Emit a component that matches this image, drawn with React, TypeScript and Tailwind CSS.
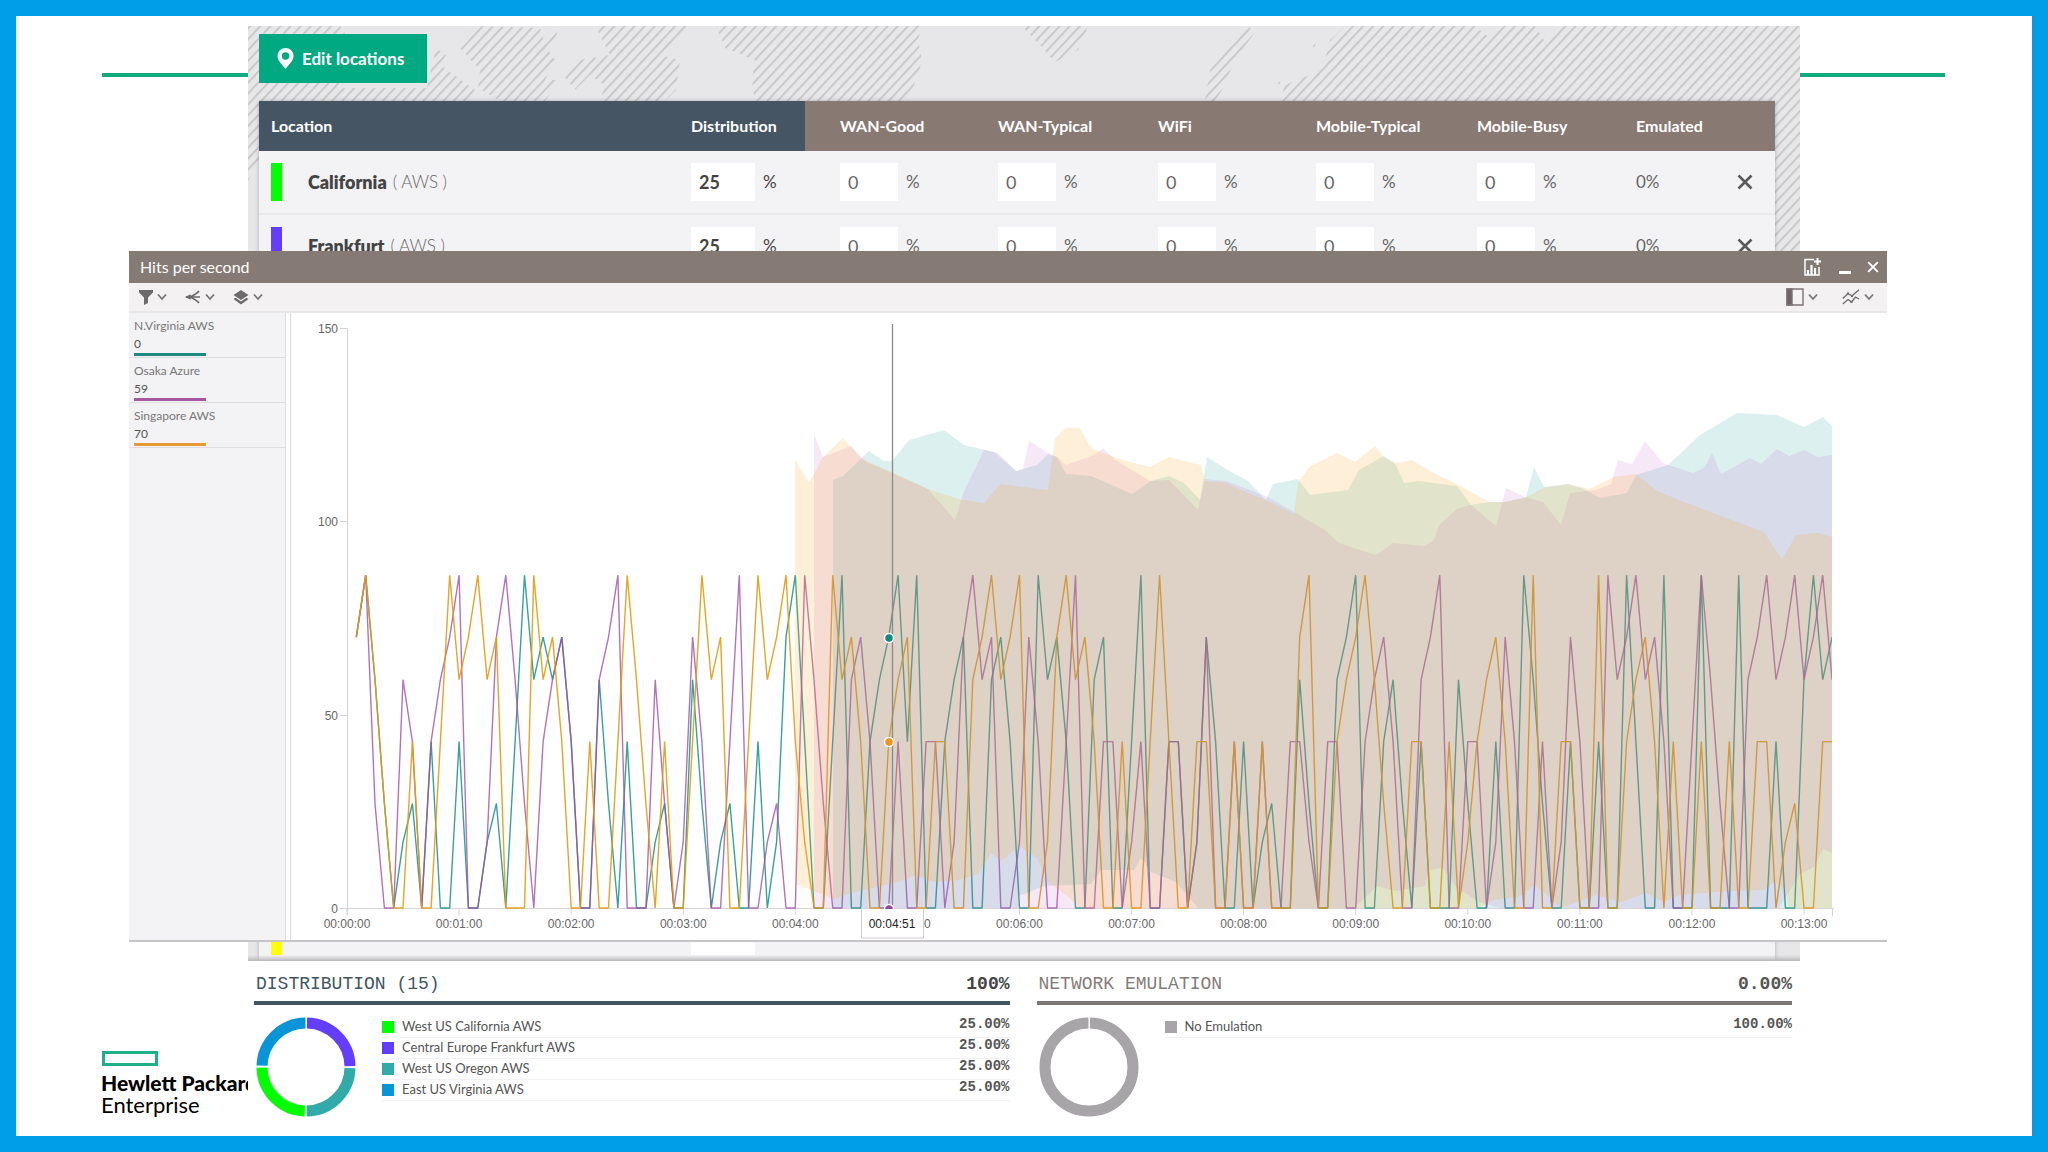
import React from "react";

/* ---------- data ---------- */

const orange = [
  70, 86, 59, 27, 0, 0, 43, 0, 0, 43, 86, 59, 70, 86, 59, 70, 0, 0, 0, 86, 59, 70, 43, 0, 0, 43, 0, 0, 43, 86, 59, 27, 0, 43, 0, 0, 43, 86, 59, 70,
  0, 0, 43, 86, 59, 70, 86, 43, 17, 0, 0, 86, 59, 70, 43, 0, 0, 43, 59, 70, 0, 0, 43, 43, 0, 0, 59, 70, 86, 59, 70, 86, 0, 0, 17, 70, 86, 59, 70, 43,
  0, 0, 43, 0, 0, 43, 86, 43, 0, 0, 43, 43, 0, 0, 43, 0, 0, 43, 0, 0, 0, 70, 86, 0, 0, 43, 59, 70, 86, 59, 27, 0, 0, 43, 43, 0, 0, 43, 0, 17,
  43, 59, 70, 43, 0, 0, 86, 0, 0, 43, 43, 0, 0, 86, 0, 0, 43, 59, 70, 43, 0, 43, 0, 0, 43, 0, 0, 43, 0, 0, 43, 43, 0, 17, 27, 0, 0, 43, 43,
];

const purple = [
  70, 86, 27, 0, 0, 59, 43, 0, 43, 59, 70, 86, 0, 0, 17, 70, 86, 59, 27, 0, 43, 59, 70, 43, 0, 0, 59, 70, 86, 0, 0, 0, 59, 27, 0, 17, 70, 43, 0, 0,
  43, 86, 0, 0, 17, 27, 0, 0, 86, 59, 27, 0, 0, 59, 70, 43, 0, 0, 43, 0, 0, 43, 43, 0, 17, 70, 86, 59, 70, 0, 0, 17, 70, 43, 0, 0, 43, 86, 0, 0,
  43, 43, 0, 17, 43, 0, 0, 43, 43, 0, 17, 70, 0, 0, 43, 0, 0, 43, 0, 0, 43, 43, 17, 0, 43, 43, 0, 0, 43, 59, 70, 43, 0, 0, 59, 70, 86, 0, 0, 43,
  43, 0, 17, 70, 43, 0, 0, 43, 0, 17, 70, 43, 0, 0, 86, 59, 70, 86, 59, 70, 43, 0, 0, 43, 86, 59, 27, 0, 0, 59, 70, 86, 59, 70, 86, 59, 70, 86, 59,
];

const teal = [
  70, 86, 59, 27, 0, 17, 27, 0, 43, 0, 0, 43, 0, 0, 17, 27, 0, 43, 86, 59, 70, 59, 70, 43, 0, 0, 59, 27, 0, 43, 0, 0, 17, 27, 0, 0, 59, 27, 0, 17,
  27, 0, 0, 43, 0, 17, 70, 86, 43, 0, 0, 43, 86, 0, 0, 43, 59, 70, 86, 43, 86, 0, 0, 43, 59, 70, 0, 0, 59, 70, 43, 0, 0, 86, 59, 70, 43, 0, 0, 59,
  70, 0, 0, 43, 86, 0, 0, 43, 43, 0, 17, 70, 43, 0, 0, 43, 0, 17, 27, 0, 0, 59, 27, 0, 0, 59, 70, 86, 0, 0, 43, 59, 27, 0, 43, 0, 0, 0, 59, 27,
  0, 0, 43, 0, 0, 86, 59, 27, 0, 0, 43, 0, 0, 43, 0, 0, 86, 43, 0, 0, 86, 0, 0, 0, 86, 0, 0, 0, 86, 0, 0, 0, 43, 0, 0, 59, 86, 59, 70,
];

const orangeBand =
  "795,460 809,483 823,457 843,438 862,459 887,470 928,489 962,500 984,503 1000,484 1048,490 1055,438 1066,428 1080,428 1091,448 1103,453 1123,460 1150,467 1169,457 1201,465 1205,481 1226,483 1248,493 1266,500 1294,514 1298,483 1309,467 1337,453 1355,462 1375,446 1384,458 1398,463 1412,460 1432,472 1457,484 1489,502 1505,502 1525,498 1543,488 1568,484 1589,489 1614,477 1636,474 1657,491 1679,500 1729,519 1764,532 1782,560 1796,535 1818,533 1832,537 " +
  "1832,908 1789,908 1786,891 1775,881 1764,890 1729,891 1679,895 1664,902 1646,893 1621,902 1596,895 1561,908 1543,891 1534,885 1518,897 1493,900 1478,908 1080,908 1066,895 1048,882 1037,858 1019,846 1001,861 991,853 978,874 959,880 934,882 916,875 898,882 851,893 834,899 814,891 795,884";

const purpleBand =
  "814,434 823,457 851,446 866,462 887,471 928,489 955,520 964,491 984,450 998,453 1016,471 1023,469 1029,441 1048,453 1057,457 1066,465 1094,455 1103,448 1114,459 1150,481 1169,480 1198,510 1205,479 1226,481 1266,496 1294,512 1325,530 1339,543 1357,549 1376,555 1393,543 1425,546 1434,540 1439,525 1457,509 1471,505 1496,526 1506,488 1525,497 1543,502 1561,525 1570,493 1596,490 1611,484 1618,460 1632,464 1645,441 1663,463 1693,473 1704,468 1712,453 1721,474 1750,458 1761,464 1777,449 1789,456 1804,450 1818,457 1832,455 " +
  "1832,853 1823,849 1814,867 1800,874 1779,908 1500,908 1479,902 1457,888 1443,868 1430,870 1425,886 1396,891 1377,886 1354,908 814,908";

const tealBand =
  "833,480 843,476 869,451 884,461 892,461 909,440 944,430 964,445 994,452 1016,471 1037,465 1048,454 1057,457 1066,474 1091,476 1132,494 1151,481 1169,476 1184,483 1200,500 1207,457 1226,469 1248,481 1266,500 1273,484 1298,479 1310,495 1348,490 1359,470 1384,456 1396,465 1404,483 1418,481 1457,486 1471,505 1489,502 1505,502 1526,497 1534,467 1544,487 1568,484 1582,488 1600,498 1627,493 1636,475 1668,465 1700,435 1737,413 1777,415 1804,427 1823,417 1832,426 " +
  "1832,908 1198,908 1176,882 1151,872 1141,858 1134,870 1101,870 1091,884 1044,886 1019,896 1018,908 833,908";

const X0 = 347;
const Y0 = 908;
const STEP = 9.34;
const UNIT = 3.87;

const toPoints = (values: number[]) =>
  values.map((v, i) => `${(X0 + STEP * (i + 1)).toFixed(1)},${(Y0 - v * UNIT).toFixed(1)}`).join(" ");

const minutes = Array.from({ length: 14 }, (_, m) => ({
  x: X0 + m * 12 * STEP,
  label: `00:${String(m).padStart(2, "0")}:00`,
}));

const legend = [
  { name: "N.Virginia AWS", value: "0", bar: "bg-[#1d8a7e]" },
  { name: "Osaka Azure", value: "59", bar: "bg-[#a6559f]" },
  { name: "Singapore AWS", value: "70", bar: "bg-[#e79a34]" },
];

const locations = [
  { name: "California", color: "bg-[#00ff00]" },
  { name: "Frankfurt", color: "bg-[#643eff]" },
];

const networks = ["WAN-Good", "WAN-Typical", "WiFi", "Mobile-Typical", "Mobile-Busy"];

const shares = [
  { name: "West US California AWS", color: "bg-[#00ff00]" },
  { name: "Central Europe Frankfurt AWS", color: "bg-[#643eff]" },
  { name: "West US Oregon AWS", color: "bg-[#33aaaa]" },
  { name: "East US Virginia AWS", color: "bg-[#0795d8]" },
];

/* ---------- small drawings ---------- */

const Chevron = () => (
  <svg viewBox="0 0 10 8" className="h-2 w-2.5" fill="none" stroke="#777" strokeWidth="1.8">
    <path d="M1 1.5 5 6l4-4.5" />
  </svg>
);

const Cross = ({ className }: { className: string }) => (
  <svg viewBox="0 0 16 16" className={className} fill="none" stroke="currentColor" strokeWidth="2.6">
    <path d="M1.5 1.5 14.5 14.5M14.5 1.5 1.5 14.5" />
  </svg>
);

function MapBackdrop() {
  return (
    <svg
      aria-hidden="true"
      className="absolute inset-0 h-full w-full"
      viewBox="248 26 1552 935"
      preserveAspectRatio="xMidYMin slice"
    >
      <defs>
        <pattern id="hatch" width="7.4" height="9" patternUnits="userSpaceOnUse" patternTransform="rotate(43)">
          <rect width="2" height="9" fill="#c9c8ca" />
        </pattern>
      </defs>
      <g fill="url(#hatch)">
        <path d="M248 26h92l8 12-10 50h89l9-40 10 7-6 10 35 25-5 11H259v60l-11 20z" />
        <path d="M475 26l65 2 5 17 10 15-10 20h15l-15 21h-45l-22-13 2-18-23-25z" />
        <path d="M548 36l10-6-4 14-12 10zM595 26h95l-10 14-20 15 20 5-4 30-11 11h-65l5-16-15-10-15 15-12-15 17-15 30-5z" />
        <path d="M716 26h206l-4 14 4 20-4 15-10 26H755l-3-21 3-20-30-12z" />
        <path d="M1022 26h66l-10 24-23 12-15-17zM1248 26l7 6-20 28-13 30-7 11h-10l5-31z" />
        <path d="M1345 26h130l12 10 14-10h34l10 16 14-16h241v230h-25V101h-495l5-16 25-10 15-15 5-20z" />
        <path d="M1310 42l9-6-5 12zM1276 80l6-3-3 8z" />
      </g>
    </svg>
  );
}

function Donut({ parts }: { parts: string[] }) {
  const r = 44;
  const c = 2 * Math.PI * r;
  const len = c / parts.length;
  return (
    <svg viewBox="0 0 100 100" className="h-[100px] w-[100px] shrink-0" fill="none" strokeWidth="11">
      {parts.map((color, i) => (
        <circle
          key={color}
          cx="50"
          cy="50"
          r={r}
          stroke={color}
          strokeDasharray={`${len - 2} ${c - len + 2}`}
          strokeDashoffset={-(len * i + 1)}
          transform="rotate(-90 50 50)"
        />
      ))}
    </svg>
  );
}

/* ---------- locations table ---------- */

function PercentCell({ label, value, bold }: { label: string; value: string; bold?: boolean }) {
  return (
    <div className="flex items-center gap-2">
      <input
        aria-label={label}
        defaultValue={value}
        className={
          bold
            ? "h-[38px] w-16 bg-white pl-2 text-lg font-bold text-[#444] outline-none"
            : "h-[38px] w-[58px] bg-white pl-2 text-lg text-[#666] outline-none"
        }
      />
      <span className={bold ? "text-[17px] text-[#444]" : "text-[17px] text-[#666]"}>%</span>
    </div>
  );
}

function Locations() {
  return (
    <section className="relative flex h-[935px] flex-col overflow-hidden bg-[#e7e6e8] pl-[11px] pr-[25px] pt-2">
      <MapBackdrop />
      <button className="relative flex h-[49px] w-[168px] shrink-0 items-center gap-2 bg-[#01a982] pl-[18px] text-[17px] font-bold text-white">
        <svg viewBox="0 0 17 21" className="h-[21px] w-[17px]" fill="#fff" fillRule="evenodd">
          <path d="M8.500 0a8 8 0 0 0-8 8c0 4.500 4.500 8.500 8 13 3.500-4.500 8-8.500 8-13a8 8 0 0 0-8-8zm0 4.300a3.700 3.700 0 1 1 0 7.400 3.700 3.700 0 0 1 0-7.400z" />
        </svg>
        Edit locations
      </button>
      <div className="relative mt-[18px] flex grow flex-col bg-[#f3f2f4] shadow-[0_0_4px_rgba(0,0,0,0.25)]">
        <table className="w-full table-fixed text-left">
          <colgroup>
            <col className="w-[421px]" />
            <col className="w-[125px]" />
            <col className="w-[158px]" />
            <col className="w-[160px]" />
            <col className="w-[158px]" />
            <col className="w-[161px]" />
            <col className="w-[159px]" />
            <col className="w-[99px]" />
            <col className="w-[75px]" />
          </colgroup>
          <thead>
            <tr className="h-[50px] text-base text-white">
              <th className="bg-[#455563] pl-3 font-bold">Location</th>
              <th className="bg-[#455563] pl-[11px] font-bold">Distribution</th>
              {networks.map((n) => (
                <th key={n} className="whitespace-nowrap bg-[#887973] pl-[35px] font-bold">
                  {n}
                </th>
              ))}
              <th className="bg-[#887973] pl-[35px] font-bold">Emulated</th>
              <th className="bg-[#887973]" aria-label="Remove" />
            </tr>
          </thead>
          <tbody>
            {locations.map((l) => (
              <tr key={l.name} className="h-[63px] border-b-2 border-[#e9e8ea]">
                <td className="pl-3">
                  <div className="flex items-center">
                    <span className={`h-[38px] w-[11px] ${l.color}`} />
                    <span className="ml-[26px] text-lg font-extrabold text-[#444]">{l.name}</span>
                    <span className="ml-1.5 text-[17px] font-light text-[#666]">( AWS )</span>
                  </div>
                </td>
                <td className="pl-[11px]">
                  <PercentCell bold label={`${l.name} distribution`} value="25" />
                </td>
                {networks.map((n) => (
                  <td key={n} className="pl-[35px]">
                    <PercentCell label={`${l.name} ${n}`} value="0" />
                  </td>
                ))}
                <td className="pl-[35px] text-[17px] text-[#666]">0%</td>
                <td className="pl-[37px]">
                  <button aria-label={`Remove ${l.name}`} className="flex text-[#5a5a5a]">
                    <Cross className="h-4 w-4" />
                  </button>
                </td>
              </tr>
            ))}
          </tbody>
        </table>
        <div className="mb-1.5 mt-auto flex pl-3">
          <span className="h-[38px] w-[11px] bg-[#ffff00]" />
          <input aria-label="Distribution" className="ml-[409px] h-[38px] w-16 bg-white outline-none" />
        </div>
      </div>
      <div className="absolute inset-x-0 bottom-0 h-1.5 bg-linear-to-b from-transparent to-[#b9b7b9]" />
    </section>
  );
}

/* ---------- summaries ---------- */

function Summary() {
  return (
    <section className="grid grid-cols-2 gap-[27px] bg-white pb-[14px] pl-1.5 pr-2 pt-2">
      <div>
        <header className="flex h-9 items-start justify-between border-b-4 border-[#425563] pl-0.5 pt-px font-['Liberation_Mono',monospace] text-lg text-[#425563]">
          <h2>DISTRIBUTION (15)</h2>
          <b className="text-[#444]">100%</b>
        </header>
        <div className="flex pl-0.5 pt-3">
          <Donut parts={["#643eff", "#33aaaa", "#00ff00", "#0795d8"]} />
          <ul className="ml-[26px] grow">
            {shares.map((s) => (
              <li key={s.name} className="flex h-[21px] items-center border-b border-[#f1f1f1] text-[13px] text-[#555]">
                <span className={`mr-2 h-3 w-3 ${s.color}`} />
                {s.name}
                <b className="mb-1.5 ml-auto font-['Liberation_Mono',monospace] text-sm">25.00%</b>
              </li>
            ))}
          </ul>
        </div>
      </div>
      <div>
        <header className="flex h-9 items-start justify-between border-b-4 border-[#7d7775] pl-0.5 pt-px font-['Liberation_Mono',monospace] text-lg text-[#857c79]">
          <h2>NETWORK EMULATION</h2>
          <b className="text-[#555]">0.00%</b>
        </header>
        <div className="flex pl-0.5 pt-3">
          <Donut parts={["#a7a5a7"]} />
          <ul className="ml-[26px] grow">
            <li className="flex h-[21px] items-center border-b border-[#f1f1f1] text-[13px] text-[#555]">
              <span className="mr-2 h-3 w-3 bg-[#a7a5a7]" />
              No Emulation
              <b className="mb-1.5 ml-auto font-['Liberation_Mono',monospace] text-sm">100.00%</b>
            </li>
          </ul>
        </div>
      </div>
    </section>
  );
}

/* ---------- chart window ---------- */

function Chart() {
  return (
    <svg viewBox="291 313 1596 627" className="block w-full" fontFamily="'Liberation Sans', Arial, sans-serif" fontSize="12">
      <g stroke="#d5d3d8" strokeWidth="1">
        <path d="M347.500 328V915M340 908.500H1834M340 328.500h7M340 521.500h7M340 715.500h7M1832.500 908v8" fill="none" />
        {minutes.map((m) => (
          <path key={m.label} d={`M${m.x} 908v7`} />
        ))}
      </g>
      <g fill="#666" textAnchor="end">
        <text x="338" y="333">150</text>
        <text x="338" y="526">100</text>
        <text x="338" y="720">50</text>
        <text x="338" y="913">0</text>
      </g>
      <g fill="#666" textAnchor="middle">
        {minutes.map((m) => (
          <text key={m.label} x={m.x} y="928">
            {m.label}
          </text>
        ))}
      </g>
      <clipPath id="plot">
        <path d="M347 313h1485v596H347z" />
      </clipPath>
      <g clipPath="url(#plot)">
        <g fill="none" strokeWidth="1.4" strokeLinejoin="bevel">
          <polyline points={toPoints(teal)} stroke="#168f88" strokeOpacity="0.85" />
          <polyline points={toPoints(purple)} stroke="#a14fa8" strokeOpacity="0.8" />
          <polyline points={toPoints(orange)} stroke="#e39a12" strokeOpacity="0.9" />
        </g>
        <polygon points={tealBand} fill="rgb(20,160,150)" fillOpacity="0.15" />
        <polygon points={purpleBand} fill="rgb(190,80,190)" fillOpacity="0.13" />
        <polygon points={orangeBand} fill="rgb(248,165,40)" fillOpacity="0.18" />
        <path d="M892.500 324V908" stroke="#8c8988" strokeWidth="1.300" />
        <g stroke="#fff" strokeWidth="1.500">
          <circle cx="889" cy="638" r="4.500" fill="#16897e" />
          <circle cx="889" cy="742" r="4.500" fill="#ec9420" />
          <circle cx="889" cy="909" r="4.500" fill="#8f4a90" />
        </g>
      </g>
      <path d="M861.500 909v29h62v-29" fill="#fff" stroke="#cfccd4" />
      <text x="892" y="928" textAnchor="middle" fill="#222">
        00:04:51
      </text>
    </svg>
  );
}

function HitsWindow() {
  return (
    <section className="absolute left-[113px] right-[145px] top-[235px] border-b-2 border-[#c6c4c6] bg-white">
      <header className="flex h-8 items-center bg-[#867a75] pl-[11px] pr-2 text-base text-white">
        <h1>Hits per second</h1>
        <button aria-label="Add to report" className="ml-auto">
          <svg viewBox="0 0 17 18" className="h-[18px] w-[17px]" fill="none" stroke="#fff" strokeWidth="1.500">
            <path d="M10 1.500H1v15.500h14V9" />
            <path d="M4 17v-5M7.500 17V7M11 17v-7" strokeWidth="2.200" />
            <path d="M13.500 0v7M10 3.500h7" strokeWidth="2" />
          </svg>
        </button>
        <button aria-label="Minimize" className="ml-[18px] flex h-4 w-3 items-end pb-px">
          <span className="h-[3px] w-3 bg-white" />
        </button>
        <button aria-label="Close" className="ml-4">
          <Cross className="h-3 w-3" />
        </button>
      </header>
      <div className="flex h-[30px] items-center border-b-2 border-[#e9e7e8] bg-[#f3f1f1] pl-2.5 pr-[13px]">
        <button aria-label="Filter" className="flex items-center gap-1">
          <svg viewBox="0 0 14 15" className="h-[15px] w-3.5" fill="#6b6b6b">
            <path d="M0 0h14v2.500L9 7.500V13l-4 2V7.500L0 2.500z" />
          </svg>
          <Chevron />
        </button>
        <button aria-label="Split" className="ml-[18px] flex items-center gap-1">
          <svg viewBox="0 0 17 14" className="h-3.5 w-4" fill="none" stroke="#6b6b6b" strokeWidth="1.800">
            <path d="M1 7h15M4.500 7C9 6 12 3.500 15 .8M4.500 7c4.500 1 7.500 3.500 10.500 6.200" />
            <path d="M0 7l6-3v6z" fill="#6b6b6b" stroke="none" />
          </svg>
          <Chevron />
        </button>
        <button aria-label="Layers" className="ml-[18px] flex items-center gap-1">
          <svg viewBox="0 0 16 15" className="h-[15px] w-4" fill="#6b6b6b">
            <path d="M8 0l7.500 5L8 10 .5 5z" />
            <path d="M.5 9l2-1.300L8 11.400l5.500-3.700 2 1.300L8 14.500z" />
          </svg>
          <Chevron />
        </button>
        <button aria-label="Layout" className="ml-auto flex items-center gap-1">
          <svg viewBox="0 0 18 18" className="h-[18px] w-[18px]" fill="none" stroke="#7b7377" strokeWidth="1.400">
            <path d="M1 1h16v16H1z" />
            <path d="M1 1h5v16H1z" fill="#6b6366" />
          </svg>
          <Chevron />
        </button>
        <button aria-label="Chart type" className="ml-6 flex items-center gap-1">
          <svg viewBox="0 0 18 16" className="h-4 w-[18px]" fill="none" stroke="#6b6b6b" strokeWidth="1.300">
            <path d="M.8 9.500 6 4.500l4 2.500 7-6.300M.8 15 6 10.500l3.500 2.500 4-5 3.500 2" />
            <path d="M5 3.500h2v2H5zM9 6h2v2H9zM8.500 12h2v2h-2z" fill="#6b6b6b" stroke="none" />
          </svg>
          <Chevron />
        </button>
      </div>
      <div className="flex">
        <aside className="mr-1 w-[157px] shrink-0 border-r border-[#dddbdd] bg-[#f3f2f4] text-xs text-[#777]">
          {legend.map((l) => (
            <div key={l.name} className="flex h-[45px] flex-col border-b border-[#dfdddf] pl-[5px] pt-1">
              <span className="leading-[18px]">{l.name}</span>
              <span className="leading-[18px] text-[#555]">{l.value}</span>
              <span className={`h-[3px] w-[72px] shrink-0 ${l.bar}`} />
            </div>
          ))}
        </aside>
        <div className="min-w-0 grow border-l border-[#dddbdd]">
          <Chart />
        </div>
      </div>
    </section>
  );
}

/* ---------- page ---------- */

export default function App() {
  return (
    <div className="relative min-h-screen overflow-hidden border-[16px] border-[#009de8] bg-white px-[232px] pt-2.5 font-['Lato',sans-serif]">
      <div className="absolute left-[86px] right-[87px] top-[57px] h-1 bg-[#12ab80]" />
      <div className="absolute bottom-5 left-[85px] w-[200px] text-black">
        <div className="mb-1.5 ml-px h-[15px] w-14 border-[3px] border-[#1fb089]" />
        <div className="whitespace-nowrap text-[21px] font-black leading-[22px]">Hewlett Packard</div>
        <div className="text-[22px] leading-[22px]">Enterprise</div>
      </div>
      <main className="relative">
        <Locations />
        <Summary />
      </main>
      <HitsWindow />
    </div>
  );
}
